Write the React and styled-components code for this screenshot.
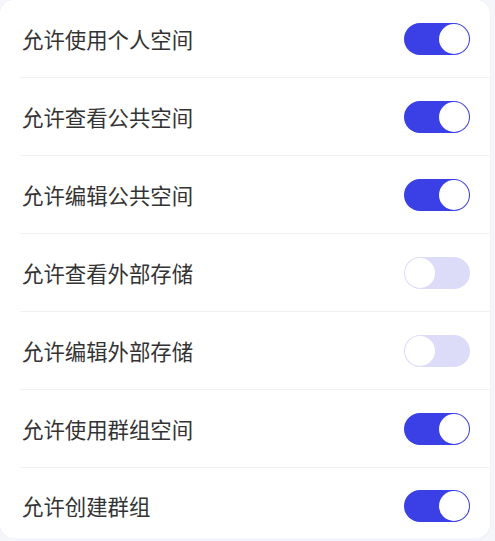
import React, { useState } from 'react';
import styled, { createGlobalStyle } from 'styled-components';

const GlobalStyle = createGlobalStyle`
  html, body {
    margin: 0;
    padding: 0;
    background: #f5f5fc;
  }
  body {
    font-family: "Noto Sans CJK SC", "Noto Sans", sans-serif;
  }
`;

const Card = styled.div`
  width: 490px;
  height: 538px;
  background: #ffffff;
  border-radius: 14px;
  box-shadow: 0 0 0 1px #f1f1f5;
  overflow: hidden;
  display: flex;
  flex-direction: column;
`;

const Row = styled.div`
  display: flex;
  align-items: center;
  justify-content: space-between;
  box-sizing: border-box;
  height: ${props => (props.$last ? '70px' : '78px')};
  padding: ${props => (props.$last ? '6px 20px 0 2px' : '0 20px 0 2px')};
  margin-left: 20px;
  border-bottom: ${props => (props.$last ? 'none' : '1px solid #f2f2f4')};
  flex-shrink: 0;
`;

const Label = styled.span`
  font-size: 21.4px;
  color: #333333;
  line-height: 1;
`;

const Track = styled.button`
  width: 66px;
  height: 32px;
  border: none;
  padding: 1px;
  border-radius: 16px;
  background: ${props => (props.$on ? '#3a3fe6' : '#dcdcf9')};
  display: flex;
  justify-content: ${props => (props.$on ? 'flex-end' : 'flex-start')};
  cursor: pointer;
  box-sizing: border-box;
`;

const Knob = styled.span`
  width: 30px;
  height: 30px;
  border-radius: 50%;
  background: #ffffff;
`;

const initial = [
  { label: '允许使用个人空间', on: true },
  { label: '允许查看公共空间', on: true },
  { label: '允许编辑公共空间', on: true },
  { label: '允许查看外部存储', on: false },
  { label: '允许编辑外部存储', on: false },
  { label: '允许使用群组空间', on: true },
  { label: '允许创建群组', on: true },
];

const App = () => {
  const [items, setItems] = useState(initial);

  const toggle = i =>
    setItems(list => list.map((it, idx) => (idx === i ? { ...it, on: !it.on } : it)));

  return (
    <>
      <GlobalStyle />
      <Card>
        {items.map((item, i) => (
          <Row key={item.label} $last={i === items.length - 1}>
            <Label>{item.label}</Label>
            <Track $on={item.on} onClick={() => toggle(i)} aria-pressed={item.on}>
              <Knob />
            </Track>
          </Row>
        ))}
      </Card>
    </>
  );
};

export default App;
